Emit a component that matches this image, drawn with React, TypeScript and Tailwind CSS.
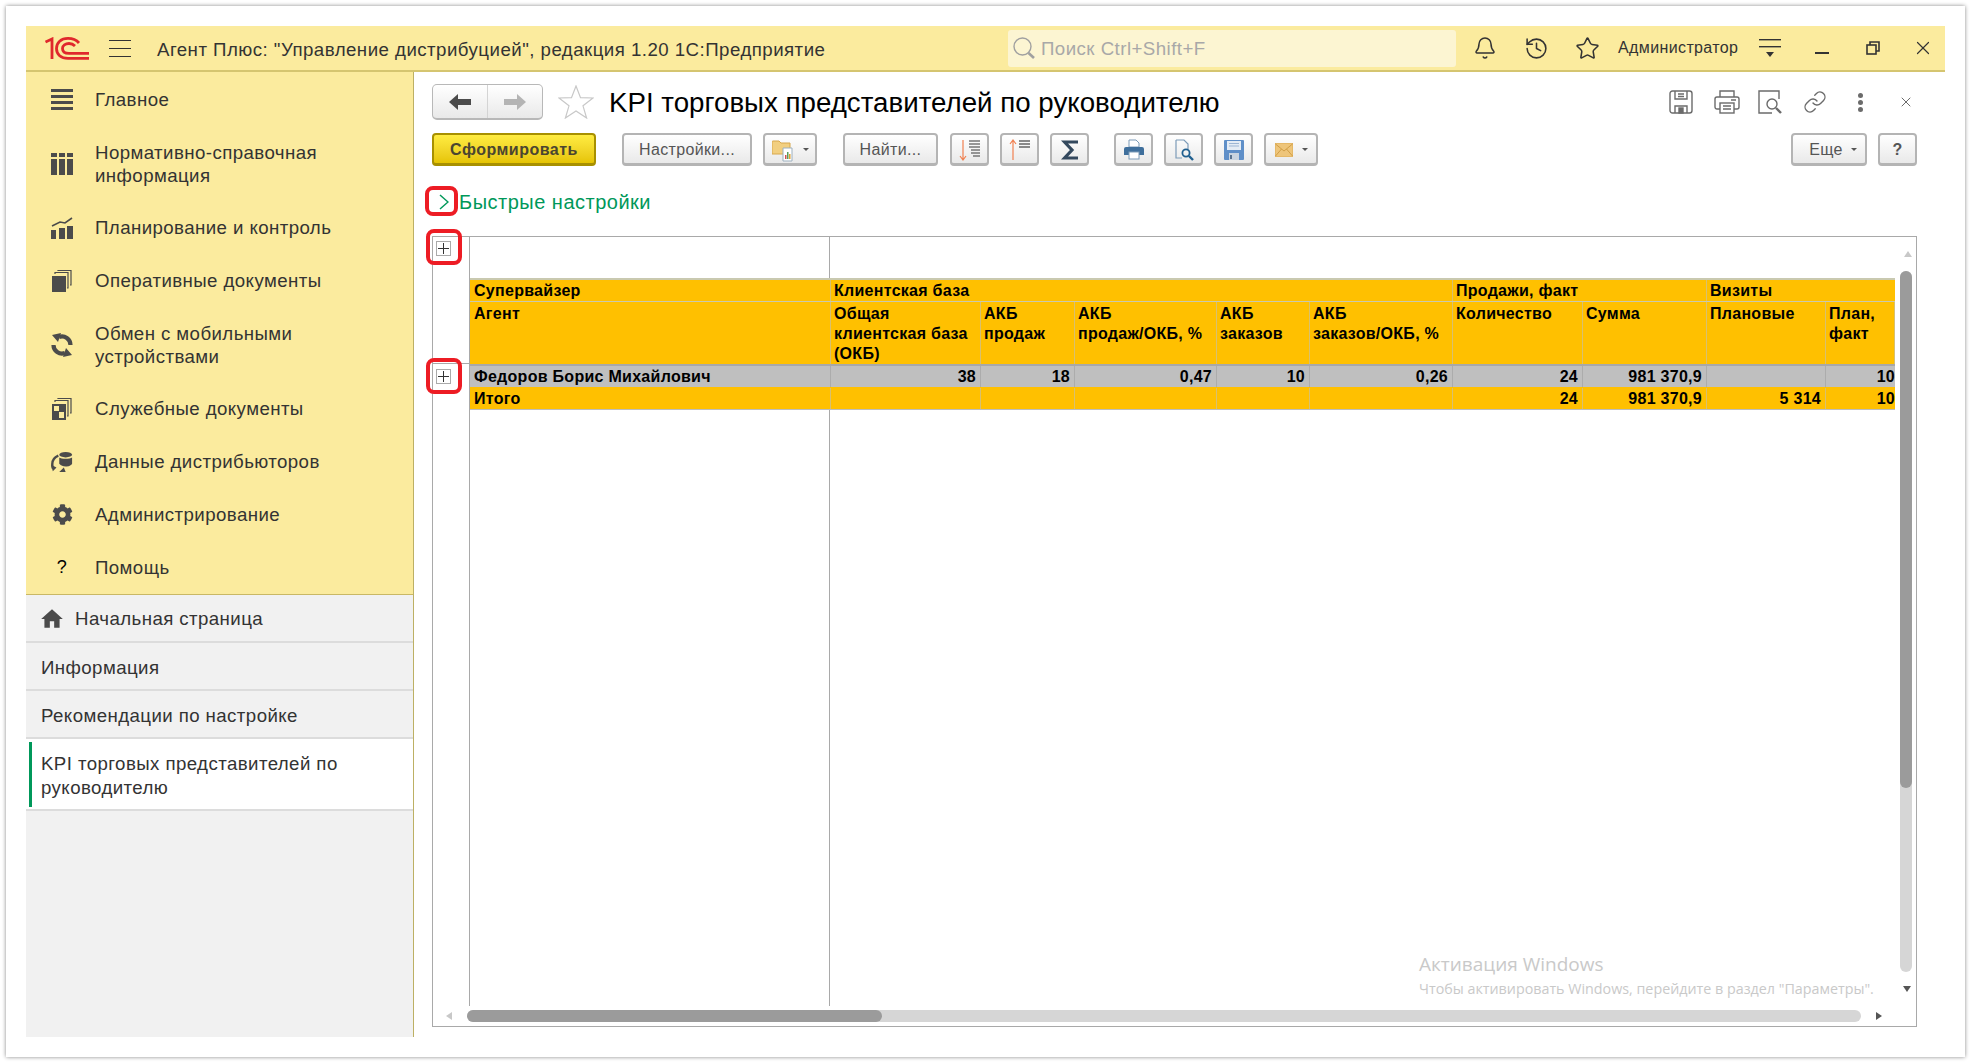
import { ReactNode } from "react";
import { Bell, History, Star, X, Link } from "lucide-react";
import { FaCog } from "react-icons/fa";
import { MdHome } from "react-icons/md";

const Btn = ({ className = "", children }: { className?: string; children: ReactNode }) => (
  <div className={"flex h-[33px] shrink-0 items-center justify-center rounded-[4px] border-2 border-b-[3px] border-[#b4b4b4] bg-linear-to-b from-white to-[#e9e9e9] pt-px text-[16px] tracking-[0.35px] text-[#555] " + className}>
    {children}
  </div>
);

const Caret = () => <span className="inline-block h-0 w-0 border-x-[3px] border-t-[3px] border-x-transparent border-t-[#555]" />;

const PlusBox = () => (
  <svg width="15" height="15" viewBox="0 0 15 15" className="block">
    <rect x="0.5" y="0.5" width="14" height="14" fill="#fff" stroke="#aaa" />
    <path d="M7.5 2V13M2 7.5H13" stroke="#333" strokeWidth="1" />
  </svg>
);

const Logo = () => (
  <svg width="44" height="23" viewBox="0 0 44 23" fill="none" stroke="#e0282c" strokeWidth="2.8">
    <path d="M0.5 5 L7 2 V22" />
    <path d="M34 6 C31 2.5 27 1.4 23 1.4 C16 1.4 11.5 5.5 11.5 11.5 C11.5 17.5 16 21.4 23 21.4 H44" />
    <path d="M30 9 C28 7 26 6.5 24 6.5 C20.5 6.5 17.5 8.5 17.5 11.5 C17.5 14.5 20 16.4 24 16.4 H44" />
  </svg>
);

const G = "#4b4b4b";
const navIcons: Record<string, ReactNode> = {
  main: (
    <svg width="22" height="22" viewBox="0 0 22 22" fill={G}>
      <rect y="0" width="22" height="3" /><rect y="6" width="22" height="3" /><rect y="12" width="22" height="3" /><rect y="18" width="22" height="3" />
    </svg>
  ),
  nsi: (
    <svg width="22" height="22" viewBox="0 0 22 22" fill={G}>
      <rect y="0" width="6" height="4" /><rect x="8" y="0" width="6" height="4" /><rect x="16" y="0" width="6" height="4" />
      <rect y="6" width="6" height="16" /><rect x="8" y="6" width="6" height="16" /><rect x="16" y="6" width="6" height="16" />
    </svg>
  ),
  plan: (
    <svg width="22" height="22" viewBox="0 0 22 22" fill={G}>
      <rect y="13" width="5" height="9" /><rect x="8" y="11" width="6" height="11" /><rect x="16" y="9" width="6" height="13" />
      <path d="M1 9 L9 5 L14 6 L21 1" stroke={G} strokeWidth="1.6" fill="none" />
    </svg>
  ),
  docs: (
    <svg width="20" height="22" viewBox="0 0 20 22" fill={G}>
      <path d="M0 6 H14 V22 H0Z" />
      <path d="M3 4V2.5H16V18H15M6 1V0.5H19V15H18" stroke={G} strokeWidth="1.2" fill="none" />
    </svg>
  ),
  sync: (
    <svg width="22" height="24" viewBox="0 0 22 24" fill="none" stroke={G} strokeWidth="4.2">
      <path d="M19.5 12 A8.5 8.5 0 0 0 8 4" />
      <path d="M2.5 12 A8.5 8.5 0 0 0 14 20" />
      <path d="M1 2 L10 0 L7 9Z M21 22 L12 24 L15 15Z" fill={G} stroke="none" />
    </svg>
  ),
  service: (
    <svg width="20" height="22" viewBox="0 0 20 22" fill={G}>
      <path d="M0 6 H14 V22 H0Z" />
      <rect x="2" y="8" width="5" height="5" fill="#fbeb9e" /><rect x="7" y="14" width="5" height="6" fill="#fbeb9e" />
      <path d="M3 4V2.5H16V18H15M6 1V0.5H19V15H18" stroke={G} strokeWidth="1.2" fill="none" />
    </svg>
  ),
  dist: (
    <svg width="24" height="22" viewBox="0 0 24 22" fill={G}>
      <ellipse cx="16" cy="3" rx="7" ry="3" />
      <path d="M9 6 C11 8 21 8 23 6 V13 C21 16 18 16 16 16 C13 16 11 15 9 13Z" />
      <path d="M8 4 C3 6 0 10 2 18" stroke={G} strokeWidth="2.6" fill="none" />
      <path d="M0 14 L6 17 L2 21Z M9 22 L14 17 L16 22Z" />
    </svg>
  ),
};

const navItems = [
  { icon: navIcons.main, lines: ["Главное"] },
  { icon: navIcons.nsi, lines: ["Нормативно-справочная", "информация"] },
  { icon: navIcons.plan, lines: ["Планирование и контроль"] },
  { icon: navIcons.docs, lines: ["Оперативные документы"] },
  { icon: navIcons.sync, lines: ["Обмен с мобильными", "устройствами"] },
  { icon: navIcons.service, lines: ["Служебные документы"] },
  { icon: navIcons.dist, lines: ["Данные дистрибьюторов"] },
  { icon: <FaCog size={21} color={G} />, lines: ["Администрирование"] },
  { icon: <span className="text-[18px] text-black">?</span>, lines: ["Помощь"] },
];

function Sidebar() {
  return (
    <aside className="flex w-[388px] shrink-0 flex-col border-r border-[#bdb064] bg-[#f1f1f1] text-[18.67px] leading-[23px] tracking-[0.42px] text-[#333]">
      <nav className="h-[523px] border-b border-[#c9b865] bg-[#fbeb9e] pt-px">
        {navItems.map((item) => (
          <div key={item.lines[0]} className={"flex items-center pt-[15px] pl-[25px] " + (item.lines.length > 1 ? "pb-[14px]" : "pb-[15px]")}>
            <div className="flex w-[22px] justify-center">{item.icon}</div>
            <div className="ml-[22px]">
              {item.lines.map((l) => <div key={l}>{l}</div>)}
            </div>
          </div>
        ))}
      </nav>
      <div className="flex h-[48px] items-center border-b-2 border-[#dcdcdc] pt-px pl-[15px]">
        <MdHome size={26} color={G} className="-ml-[2px]" />
        <span className="ml-[10px]">Начальная страница</span>
      </div>
      <div className="flex h-[48px] items-center border-b-2 border-[#dcdcdc] pt-[2px] pl-[15px]">Информация</div>
      <div className="flex h-[48px] items-center border-b-2 border-[#dcdcdc] pt-[2px] pl-[15px]">Рекомендации по настройке</div>
      <div className="h-[72px] border-b-2 border-[#dcdcdc] bg-white py-[3px] pl-[3px]">
        <div className="h-[65px] border-l-[3px] border-[#00985a] pt-[10px] pl-[9px] leading-[24px]">
          KPI торговых представителей по<br />руководителю
        </div>
      </div>
    </aside>
  );
}

function TopBar() {
  return (
    <header className="flex h-[46px] shrink-0 items-center border-b-2 border-[#d5c570] bg-[#fbeb9e] pl-[19px] text-[#333]">
      <Logo />
      <div className="ml-[20px] flex h-[17px] w-[22px] flex-col justify-between">
        <div className="h-px bg-[#333]" /><div className="h-px bg-[#333]" /><div className="h-px bg-[#333]" />
      </div>
      <div className="ml-[26px] w-[851px] pt-[3px] text-[18.67px] tracking-[0.47px] whitespace-nowrap">Агент Плюс: "Управление дистрибуцией", редакция 1.20 1С:Предприятие</div>
      <div className="flex h-[37px] w-[448px] items-center gap-[5px] rounded-[3px] bg-[#fcf5d2] pl-[4px] text-[18.67px] tracking-[0.46px] text-[#a8a8a8]">
        <svg width="24" height="24" viewBox="0 0 24 24" fill="none" stroke="#a0a0a0">
          <circle cx="10.5" cy="10.5" r="8.5" strokeWidth="1.4" />
          <path d="M16.5 17 L22 22" strokeWidth="2.6" />
        </svg>
        <span className="pt-[2px]">Поиск Ctrl+Shift+F</span>
      </div>
      <Bell size={24} strokeWidth={1.5} className="ml-[17px]" />
      <History size={25} strokeWidth={1.5} className="ml-[27px]" />
      <Star size={25} strokeWidth={1.5} className="ml-[26px]" />
      <span className="ml-[18px] text-[16px] tracking-[0.38px]">Администратор</span>
      <svg width="22" height="22" viewBox="0 0 22 22" className="ml-[21px]" fill="#333">
        <rect y="2" width="22" height="1.4" /><rect y="9" width="22" height="1.4" /><path d="M7 15H15L11 20Z" />
      </svg>
      <div className="mt-[10px] ml-[34px] h-[2px] w-[14px] bg-[#333]" />
      <svg width="14" height="14" viewBox="0 0 14 14" className="ml-[37px]" fill="none" stroke="#333" strokeWidth="1.6">
        <rect x="1" y="4" width="9" height="9" /><path d="M4 4V1H13V10H10" />
      </svg>
      <X size={22} strokeWidth={1.3} className="ml-[32px]" />
    </header>
  );
}

const cols = "grid grid-cols-[361px_150px_94px_142px_93px_143px_130px_124px_119px_69px]";

const headBottom = [
  ["Агент"],
  ["Общая", "клиентская база", "(ОКБ)"],
  ["АКБ", "продаж"],
  ["АКБ", "продаж/ОКБ, %"],
  ["АКБ", "заказов"],
  ["АКБ", "заказов/ОКБ, %"],
  ["Количество"],
  ["Сумма"],
  ["Плановые"],
  ["План,", "факт"],
];
const rowData = ["38", "18", "0,47", "10", "0,26", "24", "981 370,9", "", "10"];
const rowTotal = ["", "", "", "", "", "24", "981 370,9", "5 314", "10"];

function ReportTable() {
  const cell = "border-r border-[#d8c070] pl-[3px] first:pl-[4px]";
  const num = "flex h-full items-center justify-end border-r pr-[4px] last:border-r-0 last:pr-0";
  return (
    <div className="w-[1425px] overflow-hidden text-[16px] leading-[20px] font-bold tracking-[0.28px] text-black">
      <div className={cols + " h-[24px] items-center border-t-2 border-b border-[#c9c9b0] bg-[#ffc000]"}>
        <div className={cell + " flex h-full items-center"}>Супервайзер</div>
        <div className={cell + " col-span-5 flex h-full items-center"}>Клиентская база</div>
        <div className={cell + " col-span-2 flex h-full items-center"}>Продажи, факт</div>
        <div className="col-span-2 flex h-full items-center pl-[3px]">Визиты</div>
      </div>
      <div className={cols + " h-[62px] bg-[#ffc000]"}>
        {headBottom.map((lines) => (
          <div key={lines.join()} className={cell + " pt-[2px]"}>
            {lines.map((l) => <div key={l} className="whitespace-nowrap">{l}</div>)}
          </div>
        ))}
      </div>
      <div className={cols + " h-[23px] items-center border-t-2 border-[#a8a8a8] bg-[#bfbfbf]"}>
        <div className="flex h-full items-center border-r border-[#acacac] pl-[4px]">Федоров Борис Михайлович</div>
        {rowData.map((v, i) => (
          <div key={i} className={num + " border-[#acacac]"}>{v}</div>
        ))}
      </div>
      <div className={cols + " h-[23px] items-center border-b border-[#bdbdbd] bg-[#ffc000] pt-px"}>
        <div className="flex h-full items-center border-r border-[#d8c070] pl-[4px]">Итого</div>
        {rowTotal.map((v, i) => (
          <div key={i} className={num + " border-[#d8c070]"}>{v}</div>
        ))}
      </div>
    </div>
  );
}

function ReportPanel() {
  return (
    <div className="relative flex h-[791px] border border-[#a9a9a9] bg-white">
      <div className="w-[36px] shrink-0">
        <div className="h-[127px] border-b border-[#a9a9a9] pt-[4px] pl-[3px]"><PlusBox /></div>
        <div className="pt-[5px] pl-[3px]"><PlusBox /></div>
      </div>
      <div className="flex h-[769px] w-[1427px] flex-col border-l border-[#a9a9a9]">
        <div className="h-[41px] w-[360px] shrink-0 border-r border-[#a9a9a9]" />
        <ReportTable />
        <div className="w-[360px] flex-1 border-r border-[#a9a9a9]" />
      </div>

      {/* overlays: scrollbars, callouts, activation watermark */}
      <div className="absolute top-[34px] left-[1467px] h-[701px] w-[12px] rounded-full bg-[#d6d6d6]">
        <div className="h-[517px] rounded-full bg-[#9b9b9b]" />
      </div>
      <span className="absolute top-[14px] left-[1471px] h-0 w-0 border-x-[4px] border-b-[6px] border-x-transparent border-b-[#c8c8c8]" />
      <span className="absolute top-[749px] left-[1470px] h-0 w-0 border-x-[4px] border-t-[6px] border-x-transparent border-t-[#555]" />
      <div className="absolute top-[773px] left-[34px] h-[12px] w-[1394px] rounded-full bg-[#d6d6d6]">
        <div className="h-full w-[415px] rounded-full bg-[#9b9b9b]" />
      </div>
      <span className="absolute top-[775px] left-[13px] h-0 w-0 border-y-[4px] border-r-[6px] border-y-transparent border-r-[#c8c8c8]" />
      <span className="absolute top-[775px] left-[1443px] h-0 w-0 border-y-[4px] border-l-[6px] border-y-transparent border-l-[#555]" />
      <div className="pointer-events-none absolute top-[712px] left-[986px] font-['Open_Sans',sans-serif] whitespace-nowrap text-[#c9c9c9]">
        <div className="text-[19px] leading-[30px]">Активация Windows</div>
        <div className="text-[14.3px] leading-[20px]">Чтобы активировать Windows, перейдите в раздел "Параметры".</div>
      </div>
      <div className="absolute -top-[8px] -left-[7px] h-[36px] w-[36px] rounded-[8px] border-[4px] border-[#ed1c24]" />
      <div className="absolute top-[121px] -left-[7px] h-[36px] w-[36px] rounded-[8px] border-[4px] border-[#ed1c24]" />
    </div>
  );
}

function Content() {
  return (
    <main className="flex min-w-0 flex-1 flex-col bg-white pt-[12px] pr-[28px] pl-[18px]">
      <div className="flex h-[36px] items-center">
        <div className="flex h-[36px] w-[111px] rounded-[5px] border border-b-2 border-[#b8b8b8] bg-linear-to-b from-white to-[#e9e9e9]">
          <div className="flex w-[55px] items-center justify-center border-r border-[#d4d4d4]">
            <svg width="22" height="16" viewBox="0 0 22 16" fill="#4b4b4b"><path d="M0 8 L9 0 V5 H22 V11 H9 V16Z" /></svg>
          </div>
          <div className="flex flex-1 items-center justify-center">
            <svg width="22" height="16" viewBox="0 0 22 16" fill="#b4b4b4"><path d="M22 8 L13 0 V5 H0 V11 H13 V16Z" /></svg>
          </div>
        </div>
        <svg width="36" height="34" viewBox="0 0 36 34" className="ml-[15px]" fill="#fff" stroke="#c8c8c8" strokeWidth="1.2">
          <path d="M18 1 L22.5 12.6 L35 13 L25 20.8 L28.6 33 L18 26 L7.4 33 L11 20.8 L1 13 L13.5 12.6Z" />
        </svg>
        <h1 className="ml-[15px] pt-[2px] text-[27.7px] font-normal whitespace-nowrap text-black">KPI торговых представителей по руководителю</h1>
        <div className="ml-auto flex items-center text-[#6b6b6b]">
          <svg width="24" height="24" viewBox="0 0 24 24" fill="none" stroke="#6b6b6b" strokeWidth="1.4">
            <rect x="1" y="1" width="22" height="22" rx="2.5" />
            <path d="M6 1V9H18V1M9 4H15M9 6.5H15M6 23V16H18V23" />
            <rect x="10" y="18" width="4" height="5" fill="#6b6b6b" />
          </svg>
          <svg width="26" height="24" viewBox="0 0 26 24" className="ml-[21px]" fill="none" stroke="#6b6b6b" strokeWidth="1.4">
            <path d="M6 7V1H20V7M6 19H3 A2 2 0 0 1 1 17 V9 A2 2 0 0 1 3 7 H23 A2 2 0 0 1 25 9 V17 A2 2 0 0 1 23 19 H20" />
            <rect x="6" y="13" width="14" height="10" />
            <path d="M9 16H17M9 19H17M17 10H22" />
          </svg>
          <svg width="24" height="24" viewBox="0 0 24 24" className="ml-[18px]" fill="none" stroke="#6b6b6b" strokeWidth="1.4">
            <path d="M21 9V1H1V23H14" />
            <circle cx="14" cy="14" r="5" />
            <path d="M18 18L23 23" strokeWidth="2.4" />
          </svg>
          <Link size={24} strokeWidth={1.4} className="ml-[21px]" />
          <div className="ml-[31px] flex w-[5px] flex-col gap-[2px]">
            <div className="h-[5px] rounded-full bg-[#6b6b6b]" /><div className="h-[5px] rounded-full bg-[#6b6b6b]" /><div className="h-[5px] rounded-full bg-[#6b6b6b]" />
          </div>
          <X size={16} strokeWidth={1.5} className="mr-[3px] ml-[35px]" />
        </div>
      </div>

      <div className="mt-[13px] flex items-center">
        <div className="flex h-[33px] w-[164px] shrink-0 items-center justify-center rounded-[4px] border-2 border-b-[3px] border-[#a89000] bg-linear-to-b from-[#ffec40] to-[#e6c400] pt-px text-[16px] font-bold tracking-[0.5px] text-[#4a4530]">Сформировать</div>
        <Btn className="ml-[26px] w-[130px]">Настройки...</Btn>
        <Btn className="ml-[11px] w-[54px] gap-[9px]">
          <svg width="22" height="24" viewBox="0 0 22 24">
            <path d="M0 4 A1 1 0 0 1 1 3 H7 L9 5 H18 V16 H0Z" fill="#f2cf80" stroke="#d8a84c" />
            <path d="M11 10H20V23H11Z" fill="#fff" stroke="#9db0bf" />
            <rect x="13" y="17" width="1.5" height="4" fill="#d05050" /><rect x="15" y="14" width="1.5" height="7" fill="#5a9d5a" /><rect x="17" y="16" width="1.5" height="5" fill="#e0a030" />
          </svg>
          <Caret />
        </Btn>
        <Btn className="ml-[26px] w-[95px]">Найти...</Btn>
        <Btn className="ml-[12px] w-[39px]">
          <svg width="22" height="22" viewBox="0 0 22 22" fill="none">
            <path d="M4 1V20M1 17L4 21L7 17" stroke="#f08050" strokeWidth="1.2" />
            <path d="M10 2H21M10 5H21M10 8H21M12 11H21M12 14H21M14 17H21" stroke="#777" strokeWidth="1.3" />
          </svg>
        </Btn>
        <Btn className="ml-[11px] w-[39px]">
          <svg width="22" height="22" viewBox="0 0 22 22" fill="none">
            <path d="M4 21V2M1 5L4 1L7 5" stroke="#f08050" strokeWidth="1.2" />
            <path d="M10 2H21M10 5H21M10 8H21" stroke="#666" strokeWidth="1.5" />
          </svg>
        </Btn>
        <Btn className="ml-[11px] w-[39px]">
          <svg width="18" height="20" viewBox="0 0 18 20" fill="none" stroke="#34495e" strokeWidth="3.2"><path d="M17 2H3.5L11 10L3.5 18H17" /></svg>
        </Btn>
        <Btn className="ml-[25px] w-[39px]">
          <svg width="20" height="21" viewBox="0 0 20 21">
            <path d="M5 8V1H12L15 4V8Z" fill="#fff" stroke="#7c9bb8" />
            <path d="M0 10 A2 2 0 0 1 2 8 H18 A2 2 0 0 1 20 10 V16 H0Z" fill="#3f6f9c" />
            <rect x="5" y="13" width="10" height="7" fill="#fff" stroke="#7c9bb8" />
          </svg>
        </Btn>
        <Btn className="ml-[11px] w-[39px]">
          <svg width="20" height="22" viewBox="0 0 20 22" fill="none">
            <path d="M2 1H10L14 5V10M2 1V19H8" stroke="#7c9bb8" strokeWidth="1.2" />
            <circle cx="12" cy="14" r="3.6" stroke="#1f5f8f" strokeWidth="1.8" />
            <path d="M15 17L19 21" stroke="#1f5f8f" strokeWidth="2.4" />
          </svg>
        </Btn>
        <Btn className="ml-[11px] w-[39px]">
          <svg width="20" height="20" viewBox="0 0 20 20">
            <path d="M0 1 A1 1 0 0 1 1 0 H19 A1 1 0 0 1 20 1 V19 A1 1 0 0 1 19 20 H1 A1 1 0 0 1 0 19Z" fill="#5f8fc8" />
            <rect x="3" y="1" width="14" height="9" fill="#e4ecf5" />
            <path d="M5 3.5H15M5 6H15" stroke="#9db6d4" />
            <rect x="5" y="13" width="10" height="7" fill="#c9d4e0" />
            <rect x="6" y="15" width="2" height="4" fill="#5a7390" />
          </svg>
        </Btn>
        <Btn className="ml-[11px] w-[54px] gap-[9px]">
          <svg width="18" height="14" viewBox="0 0 18 14">
            <rect width="18" height="14" rx="1" fill="#eec57a" stroke="#d09c3c" strokeWidth="0.6" />
            <path d="M0.5 1L9 8L17.5 1M0.5 13L6.5 6M17.5 13L11.5 6" fill="none" stroke="#c99438" strokeWidth="0.8" />
          </svg>
          <Caret />
        </Btn>
        <Btn className="ml-auto w-[76px] gap-[8px] pl-[8px]">Еще <Caret /></Btn>
        <Btn className="ml-[11px] w-[39px] font-bold">?</Btn>
      </div>

      <div className="relative mt-[21px] flex h-[30px] items-center text-[20px] tracking-[0.5px] text-[#00985a]">
        <svg width="10" height="16" viewBox="0 0 10 16" fill="none" stroke="#00985a" strokeWidth="1.5" className="ml-[7px]"><path d="M1 1L9 8L1 15" /></svg>
        <span className="ml-[10px]">Быстрые настройки</span>
        <div className="absolute -top-[1px] -left-[7px] h-[30px] w-[33px] rounded-[8px] border-[4px] border-[#ed1c24]" />
      </div>

      <div className="mt-[19px]">
        <ReportPanel />
      </div>
    </main>
  );
}

export default function App() {
  return (
    <div className="h-[1063px] w-[1971px] overflow-hidden bg-white pt-[6px] pl-[6px] font-['Liberation_Sans',sans-serif]">
      <div className="flex h-[1051px] w-[1959px] flex-col bg-white p-[20px] shadow-[0_0_4px_#888]">
        <TopBar />
        <div className="flex min-h-0 flex-1">
          <Sidebar />
          <Content />
        </div>
      </div>
    </div>
  );
}
